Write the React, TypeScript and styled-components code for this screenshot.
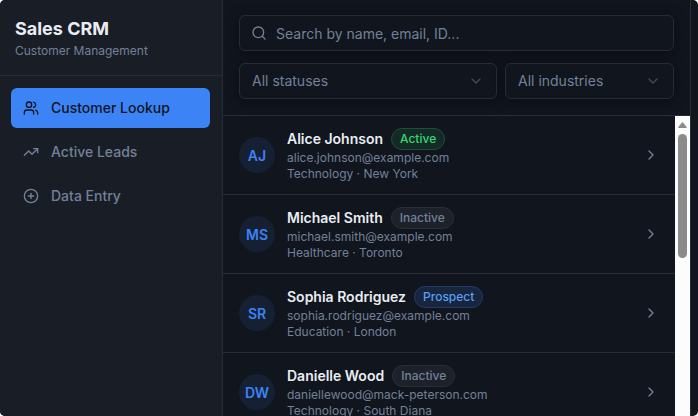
import React from "react";
import styled, { createGlobalStyle, css } from "styled-components";
import { ChevronDown, ChevronRight, CirclePlus, Search, TrendingUp, Users } from "lucide-react";

const GlobalStyle = createGlobalStyle`
  * { box-sizing: border-box; }
  body { margin: 0; background: #ffffff; font-family: Inter, sans-serif; color: #e9edf2; }
  button, input, select { font-family: inherit; }
`;

const line = "#272c38";
const muted = "#728199";

const Shell = styled.div`
  display: grid;
  grid-template-columns: 223px minmax(0, 1fr) 7px;
  height: 100vh;
  overflow: hidden;
  border-radius: 5px;
  background: #11151d;
`;

const Sidebar = styled.aside`
  background: #191d26;
  border-right: 1px solid ${line};
`;

const Brand = styled.header`
  height: 76px;
  padding: 15px 15px 0;
  border-bottom: 1px solid ${line};
`;

const Title = styled.h1`
  margin: 0;
  font-size: 18px;
  line-height: 28px;
  font-weight: 700;
`;

const Subtitle = styled.p`
  margin: 0;
  font-size: 12px;
  line-height: 16px;
  color: ${muted};
`;

const Nav = styled.nav`
  display: flex;
  flex-direction: column;
  gap: 4px;
  padding: 12px 12px 12px 11px;
`;

const NavItem = styled.button<{ $active?: boolean }>`
  display: flex;
  align-items: center;
  gap: 12px;
  height: 40px;
  padding: 0 12px;
  border: 0;
  border-radius: 6px;
  background: ${(p) => (p.$active ? "#3c83f6" : "transparent")};
  color: ${(p) => (p.$active ? "#11151d" : muted)};
  font-size: 14px;
  line-height: 20px;
  font-weight: 500;
  text-align: left;
`;

const Main = styled.main`
  display: flex;
  flex-direction: column;
  min-height: 0;
  border-right: 1px solid ${line};
`;

const Filters = styled.form`
  display: flex;
  flex-direction: column;
  gap: 12px;
  flex-shrink: 0;
  padding: 15px 16px 16px;
  border-bottom: 1px solid ${line};
`;

const FilterRow = styled.div`
  display: grid;
  grid-template-columns: minmax(0, 1fr) 169px;
  gap: 8px;
`;

const Field = styled.label`
  position: relative;
  display: block;
  height: 36px;

  svg {
    position: absolute;
    top: 10px;
    pointer-events: none;
  }
`;

const SearchField = styled(Field)`
  svg { left: 12px; color: ${muted}; }
`;

const SelectField = styled(Field)`
  svg { right: 13px; color: #434b5a; }
`;

const control = css`
  display: block;
  width: 100%;
  height: 36px;
  border: 1px solid ${line};
  border-radius: 6px;
  background: #11151d;
  color: ${muted};
  font-size: 14px;
  line-height: 20px;
  box-shadow: 0 2px 12px rgba(8, 9, 16, 0.6);
`;

const SearchInput = styled.input`
  ${control}
  padding: 0 12px 0 36px;
  &::placeholder { color: ${muted}; opacity: 1; }
`;

const Select = styled.select`
  ${control}
  appearance: none;
  padding: 0 36px 0 12px;
`;

const ListArea = styled.div`
  display: flex;
  flex: 1;
  min-height: 0;
`;

const List = styled.ul`
  flex: 1;
  min-width: 0;
  margin: 0;
  padding: 0;
  list-style: none;
  overflow: hidden;
`;

const Row = styled.button`
  display: flex;
  align-items: center;
  gap: 12px;
  width: 100%;
  height: 79px;
  padding: 0 16px;
  border: 0;
  border-bottom: 1px solid ${line};
  background: transparent;
  color: inherit;
  text-align: left;

  > svg { color: ${muted}; flex-shrink: 0; }
`;

const Avatar = styled.span`
  display: flex;
  align-items: center;
  justify-content: center;
  flex-shrink: 0;
  width: 36px;
  height: 36px;
  border-radius: 50%;
  background: #152033;
  color: #3c83f6;
  font-size: 14px;
  font-weight: 600;
`;

const Info = styled.span`
  flex: 1;
  min-width: 0;
`;

const NameLine = styled.span`
  display: flex;
  align-items: center;
  gap: 8px;
  height: 22px;
`;

const Name = styled.span`
  font-size: 14px;
  line-height: 20px;
  font-weight: 600;
`;

type Status = "Active" | "Inactive" | "Prospect";

const tones: Record<Status, [string, string, string]> = {
  Active: ["#35d66f", "#142a27", "#1a5034"],
  Inactive: [muted, "#1d212a", "#292e38"],
  Prospect: ["#5a9ff5", "#17253e", "#203c6b"],
};

const Badge = styled.span<{ $status: Status }>`
  padding: 2px 8px;
  border: 1px solid ${(p) => tones[p.$status][2]};
  border-radius: 11px;
  background: ${(p) => tones[p.$status][1]};
  color: ${(p) => tones[p.$status][0]};
  font-size: 12px;
  line-height: 16px;
  font-weight: 500;
`;

const Detail = styled.span`
  display: block;
  font-size: 12px;
  line-height: 16px;
  color: ${muted};
  white-space: nowrap;
`;

const Scrollbar = styled.div`
  display: flex;
  flex-direction: column;
  align-items: center;
  gap: 6px;
  flex-shrink: 0;
  width: 15px;
  padding-top: 6px;
  background: #fcfcfc;
`;

const Thumb = styled.div`
  width: 9px;
  height: 124px;
  border-radius: 5px;
  background: #8b8b8b;
`;

const navItems = [
  { label: "Customer Lookup", icon: Users, active: true },
  { label: "Active Leads", icon: TrendingUp, active: false },
  { label: "Data Entry", icon: CirclePlus, active: false },
];

const customers: { initials: string; name: string; status: Status; email: string; detail: string }[] = [
  { initials: "AJ", name: "Alice Johnson", status: "Active", email: "alice.johnson@example.com", detail: "Technology · New York" },
  { initials: "MS", name: "Michael Smith", status: "Inactive", email: "michael.smith@example.com", detail: "Healthcare · Toronto" },
  { initials: "SR", name: "Sophia Rodriguez", status: "Prospect", email: "sophia.rodriguez@example.com", detail: "Education · London" },
  { initials: "DW", name: "Danielle Wood", status: "Inactive", email: "daniellewood@mack-peterson.com", detail: "Technology · South Diana" },
];

export default function App() {
  return (
    <Shell>
      <GlobalStyle />
      <Sidebar>
        <Brand>
          <Title>Sales CRM</Title>
          <Subtitle>Customer Management</Subtitle>
        </Brand>
        <Nav>
          {navItems.map(({ label, icon: Icon, active }) => (
            <NavItem key={label} type="button" $active={active}>
              <Icon size={16} />
              {label}
            </NavItem>
          ))}
        </Nav>
      </Sidebar>
      <Main>
        <Filters>
          <SearchField>
            <SearchInput type="text" aria-label="Search customers" placeholder="Search by name, email, ID..." />
            <Search size={16} />
          </SearchField>
          <FilterRow>
            <SelectField>
              <Select aria-label="Status">
                <option>All statuses</option>
              </Select>
              <ChevronDown size={16} />
            </SelectField>
            <SelectField>
              <Select aria-label="Industry">
                <option>All industries</option>
              </Select>
              <ChevronDown size={16} />
            </SelectField>
          </FilterRow>
        </Filters>
        <ListArea>
          <List>
            {customers.map((c) => (
              <li key={c.email}>
                <Row type="button">
                  <Avatar>{c.initials}</Avatar>
                  <Info>
                    <NameLine>
                      <Name>{c.name}</Name>
                      <Badge $status={c.status}>{c.status}</Badge>
                    </NameLine>
                    <Detail>{c.email}</Detail>
                    <Detail>{c.detail}</Detail>
                  </Info>
                  <ChevronRight size={16} />
                </Row>
              </li>
            ))}
          </List>
          <Scrollbar aria-hidden="true">
            <svg width="9" height="6" viewBox="0 0 9 6">
              <path d="M4 0.5Q4.5 0 5 0.5L8.7 5Q9 6 8 6H1Q0 6 0.3 5Z" fill="#8b8b8b" />
            </svg>
            <Thumb />
          </Scrollbar>
        </ListArea>
      </Main>
    </Shell>
  );
}
